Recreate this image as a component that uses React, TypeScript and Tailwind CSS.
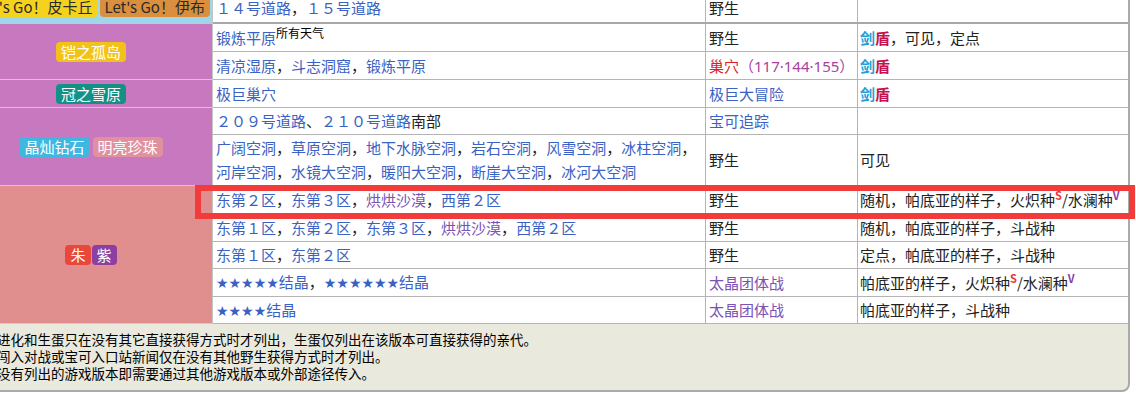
import React from 'react'

const font = { fontFamily: '"Noto Sans CJK SC", "Noto Sans", sans-serif' }

function A({ children, v }: { children: React.ReactNode; v?: boolean }) {
  return <span className={v ? 'text-[#7b52b3]' : 'text-[#3a62c4]'}>{children}</span>
}

function Places({ items }: { items: (string | [string, boolean])[] }) {
  return (
    <>
      {items.map((it, i) => (
        <React.Fragment key={i}>
          {i > 0 && <span className="text-[#222]">，</span>}
          {typeof it === 'string' ? <A>{it}</A> : <A v={it[1]}>{it[0]}</A>}
        </React.Fragment>
      ))}
    </>
  )
}

function Badge({ children, color, dark }: { children: React.ReactNode; color: string; dark?: boolean }) {
  return (
    <span className={`inline-block h-[20px] leading-[20px] px-[5px] rounded-[4px] whitespace-nowrap ${color} ${dark ? 'text-[#2a2a2a]' : 'text-white'}`}>
      {children}
    </span>
  )
}

function Stars({ n }: { n: number }) {
  return <span style={{ fontFamily: '"DejaVu Sans", sans-serif' }} className="text-[14px]">{'★'.repeat(n)}</span>
}

function SwSh() {
  return (
    <span className="font-bold">
      <span className="text-[#1ea0d6]">剑</span>
      <span className="text-[#c8124e]">盾</span>
    </span>
  )
}

function SV() {
  return (
    <>
      火炽种<sup className="text-[11px] font-bold text-[#e53a3a]">S</sup>/水澜种
      <sup className="text-[11px] font-bold text-[#8a3fa8]">V</sup>
    </>
  )
}

const td = 'border-b border-r border-[#b4b4b4] bg-white px-[3px] align-middle'
const tdLast = 'border-b border-[#b4b4b4] bg-white px-[2px] align-middle whitespace-nowrap'
const left = 'border-b border-r border-b-[#dcc0da] border-r-[#c4c4c4] text-center align-middle'

export default function App() {
  return (
    <div className="relative w-[1136px] h-[396px] overflow-hidden bg-white" style={font}>
      <div className="-ml-[32px] -mt-[8px] w-[1162px] border-2 border-[#aaaaaa] rounded-[8px] overflow-hidden bg-[#e9e9dd]">
        <table className="w-[1158px] table-fixed border-separate border-spacing-0 text-[15px] leading-[22px] text-[#222]">
          <colgroup>
            <col className="w-[243px]" />
            <col className="w-[493px]" />
            <col className="w-[152px]" />
            <col className="w-[270px]" />
          </colgroup>
          <tbody>
            <tr className="h-[30px]">
              <td className="border-b-2 border-r border-b-[#9fd6ea] border-r-[#c4c4c4] bg-[#9fd6ea] text-center align-middle">
                <div className="flex justify-center gap-[2px] pb-[2px]">
                  <Badge color="bg-[#f5d21e]" dark>Let's Go！皮卡丘</Badge>
                  <Badge color="bg-[#d98f3d]" dark>Let's Go！伊布</Badge>
                </div>
              </td>
              <td className={`${td} border-b-2 border-b-[#a8a8a8]`}>
                <A>１４号道路</A>，<A>１５号道路</A>
              </td>
              <td className={`${td} border-b-2 border-b-[#a8a8a8]`}>野生</td>
              <td className={`${tdLast} border-b-2 border-b-[#a8a8a8]`}></td>
            </tr>

            <tr className="h-[28px]">
              <td rowSpan={2} className={`${left} bg-[#c778be]`}>
                <Badge color="bg-[#f2c21b]">铠之孤岛</Badge>
              </td>
              <td className={td}>
                <A>锻炼平原</A>
                <sup className="text-[12px] text-black">所有天气</sup>
              </td>
              <td className={td}>野生</td>
              <td className={tdLast}>
                <SwSh />，可见，定点
              </td>
            </tr>
            <tr className="h-[28px]">
              <td className={td}>
                <Places items={['清凉湿原', '斗志洞窟', '锻炼平原']} />
              </td>
              <td className={`${td} whitespace-nowrap`}>
                <span className="text-[#dd1f26]">巢穴</span>
                <span className="text-[#a8429e]">
                  （<span style={{ fontFamily: '"Noto Sans", sans-serif' }}>117·144·155</span>）
                </span>
              </td>
              <td className={tdLast}>
                <SwSh />
              </td>
            </tr>

            <tr className="h-[28px]">
              <td className={`${left} bg-[#c778be]`}>
                <Badge color="bg-[#149187]">冠之雪原</Badge>
              </td>
              <td className={td}>
                <A>极巨巢穴</A>
              </td>
              <td className={td}>
                <A>极巨大冒险</A>
              </td>
              <td className={tdLast}>
                <SwSh />
              </td>
            </tr>

            <tr className="h-[27px]">
              <td rowSpan={2} className={`${left} bg-[#c778be]`}>
                <div className="flex justify-center gap-[3px]">
                  <Badge color="bg-[#3fb7e0]">晶灿钻石</Badge>
                  <Badge color="bg-[#e0909e]">明亮珍珠</Badge>
                </div>
              </td>
              <td className={td}>
                <A>２０９号道路</A>、<A>２１０号道路</A>南部
              </td>
              <td className={td}>
                <A>宝可追踪</A>
              </td>
              <td className={tdLast}></td>
            </tr>
            <tr className="h-[51px]">
              <td className={`${td} leading-[24px]`}>
                <Places
                  items={[
                    '广阔空洞',
                    '草原空洞',
                    '地下水脉空洞',
                    '岩石空洞',
                    '风雪空洞',
                    '冰柱空洞',
                    '河岸空洞',
                    '水镜大空洞',
                    '暖阳大空洞',
                    '断崖大空洞',
                    '冰河大空洞',
                  ]}
                />
              </td>
              <td className={td}>野生</td>
              <td className={tdLast}>可见</td>
            </tr>

            <tr className="h-[28px]">
              <td rowSpan={5} className={`${left} border-b-[#b4b4b4] bg-[#e08e8e]`}>
                <div className="flex justify-center gap-[1px]">
                  <Badge color="bg-[#e8473a]">朱</Badge>
                  <Badge color="bg-[#8c3fa0]">紫</Badge>
                </div>
              </td>
              <td className={td}>
                <Places items={['东第２区', '东第３区', ['烘烘沙漠', true], '西第２区']} />
              </td>
              <td className={td}>野生</td>
              <td className={tdLast}>
                随机，帕底亚的样子，<SV />
              </td>
            </tr>
            <tr className="h-[28px]">
              <td className={td}>
                <Places items={['东第１区', '东第２区', '东第３区', ['烘烘沙漠', true], '西第２区']} />
              </td>
              <td className={td}>野生</td>
              <td className={tdLast}>随机，帕底亚的样子，斗战种</td>
            </tr>
            <tr className="h-[27px]">
              <td className={td}>
                <Places items={['东第１区', '东第２区']} />
              </td>
              <td className={td}>野生</td>
              <td className={tdLast}>定点，帕底亚的样子，斗战种</td>
            </tr>
            <tr className="h-[28px]">
              <td className={td}>
                <A>
                  <Stars n={5} />结晶
                </A>
                ，
                <A>
                  <Stars n={6} />结晶
                </A>
              </td>
              <td className={td}>
                <A v>太晶团体战</A>
              </td>
              <td className={tdLast}>
                帕底亚的样子，<SV />
              </td>
            </tr>
            <tr className="h-[27px]">
              <td className={td}>
                <A>
                  <Stars n={4} />结晶
                </A>
              </td>
              <td className={td}>
                <A v>太晶团体战</A>
              </td>
              <td className={tdLast}>帕底亚的样子，斗战种</td>
            </tr>
          </tbody>
        </table>
        <div className="pl-[27px] pt-[7px] pb-[8px] text-[13.5px] leading-[17px] text-black whitespace-nowrap">
          <div>进化和生蛋只在没有其它直接获得方式时才列出，生蛋仅列出在该版本可直接获得的亲代。</div>
          <div>闯入对战或宝可入口站新闻仅在没有其他野生获得方式时才列出。</div>
          <div>没有列出的游戏版本即需要通过其他游戏版本或外部途径传入。</div>
        </div>
      </div>
      <div className="absolute left-[195px] top-[185px] w-[940px] h-[34px] border-[6px] border-[#f23c3c]" />
    </div>
  )
}
